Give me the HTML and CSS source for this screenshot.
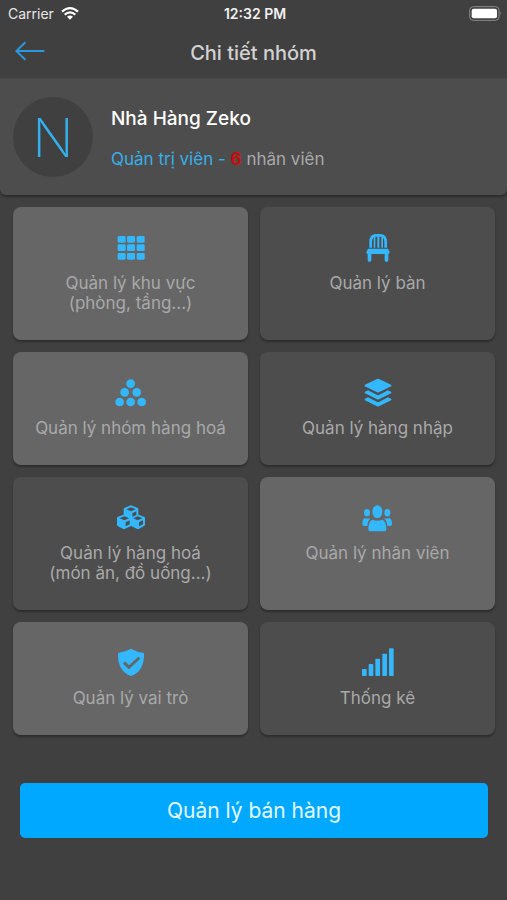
FILE: index.html
```html
<!DOCTYPE html>
<html lang="vi">
<head>
<meta charset="utf-8">
<meta name="viewport" content="width=device-width, initial-scale=1">
<title>Chi tiết nhóm</title>
<link rel="stylesheet" href="styles.css">
</head>
<body>
<div class="status">
  <div class="carrier">
    <span>Carrier</span>
    <svg class="wifi" viewBox="0 0 54 39" aria-hidden="true">
      <g fill="none" stroke="#fff" stroke-width="6.5">
        <path d="M3 14Q27 -7 51 14"/>
        <path d="M11 23Q27 9 43 23"/>
      </g>
      <path d="M18 29Q27 22 36 29L27 38Z" fill="#fff"/>
    </svg>
  </div>
  <span class="clock">12:32 PM</span>
  <svg class="battery" viewBox="0 0 99 45" aria-hidden="true">
    <rect x="2" y="2" width="88" height="41" rx="11" fill="none" stroke="#8b8b8b" stroke-width="3"/>
    <rect x="8" y="8" width="76" height="29" rx="6" fill="#fff"/>
    <path d="M94 16Q99 22 94 29Z" fill="#8b8b8b"/>
  </svg>
</div>
<header class="navbar">
  <button class="back" type="button" aria-label="Quay lại">
    <svg viewBox="0 0 90 60" aria-hidden="true"><path d="M31 4L4 30L31 56M4 30H88" fill="none" stroke="#2b97dc" stroke-width="6"/></svg>
  </button>
  <h1 class="title">Chi tiết nhóm</h1>
</header>
<main>
  <section class="profile">
    <div class="avatar">N</div>
    <div class="info">
      <h2 class="name">Nhà Hàng Zeko</h2>
      <p class="meta"><span class="role">Quản trị viên - </span><b class="count">6</b> nhân viên</p>
    </div>
  </section>
  <nav class="grid">
    <a class="card light" href="#">
      <svg class="icon" viewBox="0 0 96 90" aria-hidden="true">
        <rect x="8" y="9" width="24" height="20" rx="4"/><rect x="36" y="9" width="24" height="20" rx="4"/><rect x="65" y="9" width="24" height="20" rx="4"/>
        <rect x="8" y="34" width="24" height="20" rx="4"/><rect x="36" y="34" width="24" height="20" rx="4"/><rect x="65" y="34" width="24" height="20" rx="4"/>
        <rect x="8" y="60" width="24" height="20" rx="4"/><rect x="36" y="60" width="24" height="20" rx="4"/><rect x="65" y="60" width="24" height="20" rx="4"/>
      </svg>
      <span>Quản lý khu vực<br>(phòng, tầng...)</span>
    </a>
    <a class="card" href="#">
      <svg class="icon" viewBox="0 0 96 90" aria-hidden="true">
        <path d="M26 44V27Q26 7 42 7H54Q71 7 71 27V44" fill="none" stroke="#33b8ff" stroke-width="8"/>
        <path d="M35 8h5v36h-5zM46 8h6v36h-6zM58 8h5v36h-5z"/>
        <path d="M18 47H78L83 57Q83 63 79 63V82Q79 86 75 86H72Q68 86 68 82V63H28V82Q28 86 24 86H21Q17 86 17 82V63Q13 63 13 57Z"/>
      </svg>
      <span>Quản lý bàn</span>
    </a>
    <a class="card light" href="#">
      <svg class="icon" viewBox="0 0 96 90" aria-hidden="true">
        <circle cx="47" cy="17" r="13"/><circle cx="29" cy="43" r="13"/><circle cx="65" cy="43" r="13"/>
        <circle cx="14" cy="72" r="13"/><circle cx="47" cy="72" r="13"/><circle cx="80" cy="72" r="13"/>
      </svg>
      <span>Quản lý nhóm hàng hoá</span>
    </a>
    <a class="card" href="#">
      <svg class="icon" viewBox="0 0 96 90" aria-hidden="true">
        <path d="M45 3Q48 2 51 3L87 20Q90 23 87 25L51 43Q48 44 45 43L9 25Q6 23 9 20Z"/>
        <path d="M18 37L44 50Q48 52 52 50L78 37L87 41Q90 44 87 46L51 64Q48 65 45 64L9 46Q6 44 9 41Z"/>
        <path d="M18 58L44 71Q48 73 52 71L78 58L87 62Q90 65 87 67L51 85Q48 86 45 85L9 67Q6 65 9 62Z"/>
      </svg>
      <span>Quản lý hàng nhập</span>
    </a>
    <a class="card" href="#">
      <svg class="icon" viewBox="0 0 96 90" aria-hidden="true">
        <path fill-rule="evenodd" d="M48 7L67 14Q70 15 70 18V35L87 41Q90 42 90 45V65Q90 68 87 69L71 78Q69 79 67 78L48 69L29 78Q27 79 25 78L9 70Q6 69 6 66V45Q6 42 9 41L26 35V18Q26 15 29 14ZM48 13L34 19L48 25L62 19ZM52 31V41L64 36V25ZM28 40L14 46L28 52L42 46ZM68 40L55 46L68 52L82 46ZM32 58V70L44 64V52ZM72 58V70L84 64V52Z"/>
      </svg>
      <span>Quản lý hàng hoá<br>(món ăn, đồ uống...)</span>
    </a>
    <a class="card light" href="#">
      <svg class="icon" viewBox="0 0 96 90" aria-hidden="true">
        <ellipse cx="46" cy="26" rx="15" ry="19"/><ellipse cx="15" cy="29" rx="9" ry="11"/><ellipse cx="76" cy="29" rx="9" ry="11"/>
        <path d="M31 50Q46 56 61 50Q73 55 73 79Q73 85 67 85H25Q19 85 19 79Q19 55 31 50Z"/>
        <path d="M8 45Q15 48 25 46Q17 54 16 69H7Q1 69 1 63Q1 50 8 45Z"/>
        <path d="M83 45Q76 48 66 46Q75 54 76 69H84Q90 69 90 63Q90 50 83 45Z"/>
      </svg>
      <span>Quản lý nhân viên</span>
    </a>
    <a class="card light" href="#">
      <svg class="icon" viewBox="0 0 96 90" aria-hidden="true">
        <path fill-rule="evenodd" d="M48 2Q67 13 84 14Q87 14 87 18Q88 70 48 84Q8 70 9 18Q9 14 12 14Q31 12 48 2ZM30 40L24 47L42 64L76 32L70 26L42 52Z"/>
      </svg>
      <span>Quản lý vai trò</span>
    </a>
    <a class="card" href="#">
      <svg class="icon" viewBox="0 0 96 90" aria-hidden="true">
        <rect x="0" y="63" width="14" height="21" rx="2"/><rect x="20" y="48" width="14" height="36" rx="2"/><rect x="40" y="32" width="14" height="52" rx="2"/><rect x="61" y="17" width="14" height="67" rx="2"/><rect x="81" y="1" width="14" height="83" rx="2"/>
      </svg>
      <span>Thống kê</span>
    </a>
  </nav>
  <div class="actions">
    <button class="primary" type="button">Quản lý bán hàng</button>
  </div>
</main>
</body>
</html>
```
FILE: styles.css
```css
* {
  box-sizing: border-box;
}

body {
  margin: 0;
  min-height: 100vh;
  background: #404040;
  color: #a9a9a9;
  font-family: Inter, "Liberation Sans", sans-serif;
}

h1,
h2,
p {
  margin: 0;
}

.status {
  display: grid;
  grid-template-columns: 1fr auto 1fr;
  align-items: center;
  height: 27px;
  padding: 0 5px 0 8px;
  color: #e6e6e6;
  font-size: 14px;
}

.carrier {
  display: flex;
  align-items: center;
  gap: 7px;
}

.wifi {
  width: 18px;
  height: 13px;
}

.clock {
  color: #f0f0f0;
  font-weight: 600;
}

.battery {
  width: 33px;
  height: 15px;
  justify-self: end;
}

.navbar {
  display: grid;
  grid-template-columns: 48px 1fr 48px;
  align-items: center;
  height: 52px;
  border-bottom: 1px solid #484848;
}

.back {
  display: flex;
  padding: 0 0 4px 15px;
  border: 0;
  background: none;
}

.back svg {
  width: 30px;
  height: 20px;
}

.title {
  color: #d2d2d2;
  font-size: 20px;
  font-weight: 500;
  text-align: center;
}

.profile {
  display: flex;
  align-items: center;
  gap: 18px;
  height: 116px;
  padding: 0 13px;
  border-radius: 0 0 6px 6px;
  background: #4d4d4d;
  box-shadow: 0 2px 2px #2d2d2d;
}

.avatar {
  display: flex;
  flex: none;
  align-items: center;
  justify-content: center;
  width: 80px;
  height: 80px;
  border-radius: 50%;
  background: #404040;
  color: #33b0ee;
  font-size: 54px;
  font-weight: 200;
}

.info {
  padding-top: 2px;
}

.name {
  color: #fff;
  font-size: 19px;
  font-weight: 500;
  line-height: 24px;
}

.meta {
  margin-top: 18px;
  font-size: 17px;
  line-height: 20px;
}

.role {
  color: #38aee8;
}

.count {
  color: #cc0a0a;
}

.grid {
  display: grid;
  grid-template-columns: 1fr 1fr;
  gap: 12px;
  padding: 12px 12px 0 13px;
}

.card {
  display: flex;
  flex-direction: column;
  align-items: center;
  gap: 10px;
  padding: 26px 8px 27px;
  border-radius: 8px;
  background: #4d4d4d;
  box-shadow: 0 2px 2px #2d2d2d;
  color: #a9a9a9;
  font-size: 17px;
  line-height: 20px;
  text-align: center;
  text-decoration: none;
}

.light {
  background: #666;
}

.icon {
  width: 32px;
  height: 30px;
  fill: #33b8ff;
}

.actions {
  padding: 48px 19px 24px 20px;
}

.primary {
  width: 100%;
  height: 55px;
  border: 0;
  border-radius: 5px;
  background: #00a8ff;
  color: #e2f8ff;
  font-family: inherit;
  font-size: 21px;
}
```
